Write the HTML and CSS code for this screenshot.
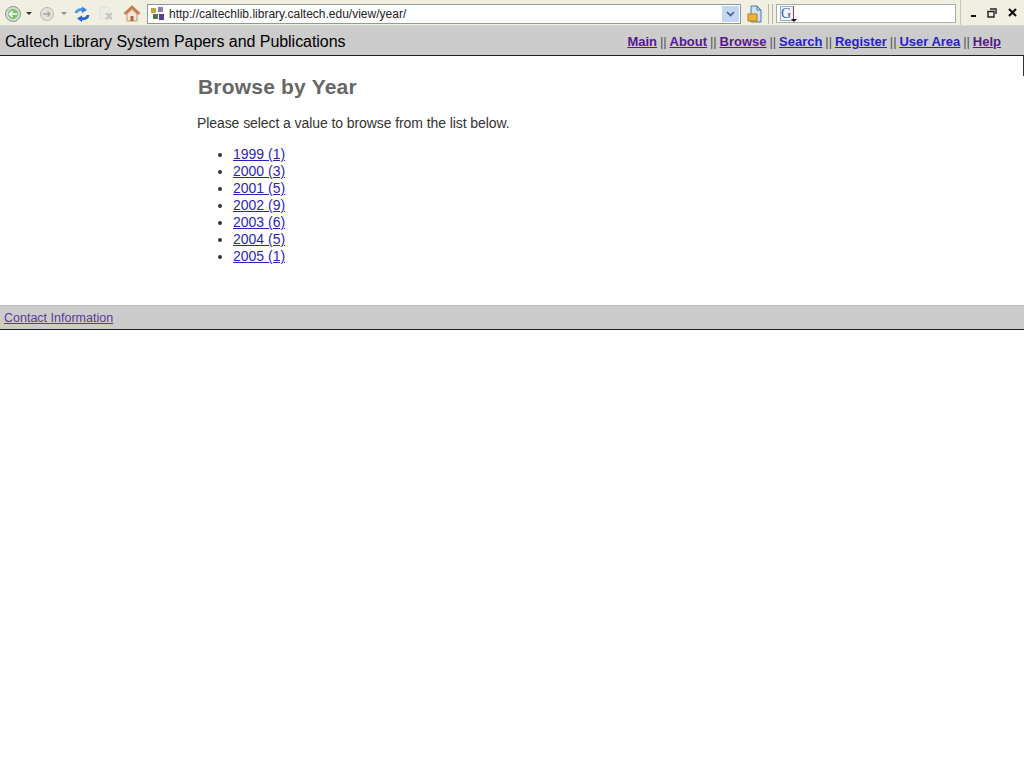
FILE: index.html
```html
<!DOCTYPE html>
<html lang="en">
<head>
	<meta charset="UTF-8">
	<title>Browse by Year</title>
	<link rel="stylesheet" href="styles.css">
</head>
<body>
<div class="toolbar">
	<svg class="tool" width="18" height="18" viewBox="0 0 18 18"><circle cx="9" cy="9" r="7.500" fill="#d4dcd6" stroke="#8a968e"/><circle cx="9" cy="9" r="5" fill="#7cc06a"/><path d="M13 9H6M8.500 6 5.500 9l3 3" fill="none" stroke="#fff" stroke-width="1.600"/></svg>
	<span class="drop"></span>
	<svg class="tool" width="16" height="16" viewBox="0 0 16 16"><circle cx="8" cy="8" r="6.500" fill="#e2e2dc" stroke="#b8b8b0"/><path d="M4 8h7M8.500 5.500 11 8l-2.500 2.500" fill="none" stroke="#a8a8a0" stroke-width="1.400"/></svg>
	<span class="drop drop-off"></span>
	<svg class="tool" width="18" height="18" viewBox="0 0 18 18"><path d="M3 8a5 4 0 0 1 7-3" fill="none" stroke="#4f9be8" stroke-width="3"/><path d="M9 1.500l5 3.500-5 3z" fill="#2f7fdc"/><path d="M15 10a5 4 0 0 1-7 3.500" fill="none" stroke="#2a68cc" stroke-width="3"/><path d="M9 17l-5-3.500 5-3z" fill="#2a68cc"/></svg>
	<svg class="tool tool-stop" width="16" height="16" viewBox="0 0 16 16"><rect x="1" y="1" width="9" height="12" fill="#ecece6" stroke="#e0e0da"/><path d="M7 7l6 6M13 7l-6 6" stroke="#c4c4be" stroke-width="2"/></svg>
	<svg class="tool tool-home" width="18" height="18" viewBox="0 0 18 18"><path d="M4 9v7h10V9L9 4.500z" fill="#f2e6d2" stroke="#b89a78"/><path d="M1.500 9 9 2l7.500 7" fill="none" stroke="#c8784a" stroke-width="2.400"/><rect x="7.500" y="11" width="3" height="5" fill="#a8683a"/></svg>
	<div class="address">
		<svg width="15" height="15" viewBox="0 0 15 15"><rect x="1" y="2" width="5" height="5" fill="#c8a040"/><rect x="8" y="1" width="5" height="5" fill="#8c7cb0"/><rect x="3" y="8" width="5" height="5" fill="#4a7a48"/><rect x="9" y="8" width="5" height="6" fill="#5a3c94"/></svg>
		<span class="url">http://caltechlib.library.caltech.edu/view/year/</span>
		<span class="go-down"><svg width="9" height="6" viewBox="0 0 9 6"><path d="M1 1l3.500 3.500L8 1" fill="none" stroke="#3f5f96" stroke-width="1.700"/></svg></span>
	</div>
	<svg class="tool-lock" width="16" height="18" viewBox="0 0 16 18"><path d="M4 1h6l4 4v12H4z" fill="#cfe0f4" stroke="#4a78b4"/><path d="M10 1v4h4" fill="none" stroke="#4a78b4"/><rect x="1" y="9" width="9" height="7" fill="#f0b030" stroke="#b87c18"/></svg>
	<span class="sep"></span>
	<div class="search">
		<span class="g-box"><span class="g-letter">G</span></span>
	</div>
	<div class="winbtns">
		<span class="win-min"></span>
		<svg width="10" height="10" viewBox="0 0 10 10"><path d="M3 1h6v5M1 3.500h6V9H1z" fill="none" stroke="#222" stroke-width="1.400"/></svg>
		<svg width="9" height="9" viewBox="0 0 9 9"><path d="M1 1l7 7M8 1 1 8" stroke="#111" stroke-width="2.200"/></svg>
	</div>
</div>

<div class="header">
	<div class="site-name">Caltech Library System Papers and Publications</div>
	<div class="menu">
		<a class="seen" href="#">Main</a> || <a class="seen" href="#">About</a> || <a class="seen" href="#">Browse</a> || <a href="#">Search</a> || <a href="#">Register</a> || <a href="#">User Area</a> || <a class="seen" href="#">Help</a>
	</div>
</div>
<span class="scroll-tick"></span>

<div class="main">
	<h1>Browse by Year</h1>
	<p>Please select a value to browse from the list below.</p>
	<ul>
		<li><a href="#">1999 (1)</a></li>
		<li><a href="#">2000 (3)</a></li>
		<li><a href="#">2001 (5)</a></li>
		<li><a href="#">2002 (9)</a></li>
		<li><a href="#">2003 (6)</a></li>
		<li><a href="#">2004 (5)</a></li>
		<li><a href="#">2005 (1)</a></li>
	</ul>
</div>

<div class="footer">
	<a href="#">Contact Information</a>
</div>
</body>
</html>
```
FILE: styles.css
```css
* {
	margin: 0;
	padding: 0;
}
html {
	overflow: hidden;
}
body {
	position: relative;
	font-family: "Liberation Sans", Arial, sans-serif;
	font-size: 14px;
	color: #333;
	background: #fff;
}
a {
	color: #2a1fc0;
}

.toolbar {
	display: flex;
	align-items: center;
	height: 26px;
	padding: 2px 0 0 4px;
	background: #f1efe2;
	border-bottom: 1px solid #d8d6c8;
	box-sizing: border-box;
}
.tool {
	flex: none;
}
.drop {
	width: 0;
	height: 0;
	margin: 0 7px 0 4px;
	border-left: 3px solid transparent;
	border-right: 3px solid transparent;
	border-top: 3px solid #333;
}
.drop-off {
	border-top-color: #888;
	margin: 0 6px;
}
.tool-stop {
	margin-left: 8px;
}
.tool-home {
	margin-left: 8px;
}
.address {
	display: flex;
	align-items: center;
	width: 594px;
	height: 20px;
	margin-left: 6px;
	padding-left: 2px;
	background: #fff;
	border: 1px solid #8c9a9e;
	box-sizing: border-box;
}
.url {
	flex: 1;
	margin-left: 4px;
	font-size: 12px;
	color: #222;
}
.go-down {
	display: flex;
	align-items: center;
	justify-content: center;
	width: 17px;
	height: 16px;
	margin-right: 1px;
	background: #c4d6f2;
}
.tool-lock {
	margin-left: 6px;
}
.sep {
	width: 3px;
	height: 20px;
	margin-left: 5px;
	border-left: 1px solid #b8b6a8;
	border-right: 1px solid #b8b6a8;
}
.search {
	width: 180px;
	height: 19px;
	margin-left: 3px;
	padding-left: 3px;
	background: #fff;
	border: 1px solid #a8aeb0;
	box-sizing: border-box;
}
.g-box {
	position: relative;
	display: block;
	width: 14px;
	height: 15px;
	margin-top: 1px;
	border: 1px solid #8cb0e0;
	border-right-color: #c03030;
	box-sizing: border-box;
	background: #f4f8fc;
}
.g-box::after {
	content: "";
	position: absolute;
	left: 10px;
	bottom: -2px;
	border-left: 3px solid transparent;
	border-right: 3px solid transparent;
	border-top: 3px solid #111;
}
.g-letter {
	display: block;
	font-family: "Liberation Serif", serif;
	font-size: 14px;
	line-height: 13px;
	color: #3058a8;
}
.winbtns {
	display: flex;
	align-self: stretch;
	align-items: center;
	gap: 11px;
	margin: -2px 0 0 4px;
	padding-left: 10px;
	border-left: 1px solid #c8c6b8;
}
.win-min {
	width: 5px;
	height: 2px;
	margin-top: 6px;
	background: #111;
}

.header {
	display: flex;
	justify-content: space-between;
	align-items: center;
	height: 30px;
	padding: 2px 23px 0 5px;
	background: #ccc;
	border-bottom: 1px solid #222;
	box-sizing: border-box;
}
.site-name {
	font-size: 16px;
	letter-spacing: -0.04px;
	color: #000;
}
.menu {
	font-size: 13px;
	word-spacing: -0.75px;
	color: #555;
}
.menu a {
	font-weight: bold;
	word-spacing: 0;
}
a.seen {
	color: #551a8b;
}
.scroll-tick {
	position: absolute;
	top: 56px;
	right: 0;
	width: 1px;
	height: 20px;
	background: #333;
}

.main {
	height: 249px;
	padding: 19px 0 0 198px;
	box-sizing: border-box;
}
h1 {
	font-size: 21px;
	line-height: 24px;
	letter-spacing: 0.2px;
	color: #666;
}
.main p {
	margin: 16px 0 0 -1px;
	line-height: 16px;
	letter-spacing: -0.08px;
}
ul {
	margin-top: 15px;
	padding-left: 35px;
}
li {
	line-height: 17px;
}

.footer {
	height: 25px;
	padding: 5px 0 0 4px;
	background: #ccc;
	border-top: 1px solid #bbb;
	border-bottom: 1px solid #222;
	box-sizing: border-box;
	font-size: 12.500px;
}
.footer a {
	color: #5a3a9a;
}
```
